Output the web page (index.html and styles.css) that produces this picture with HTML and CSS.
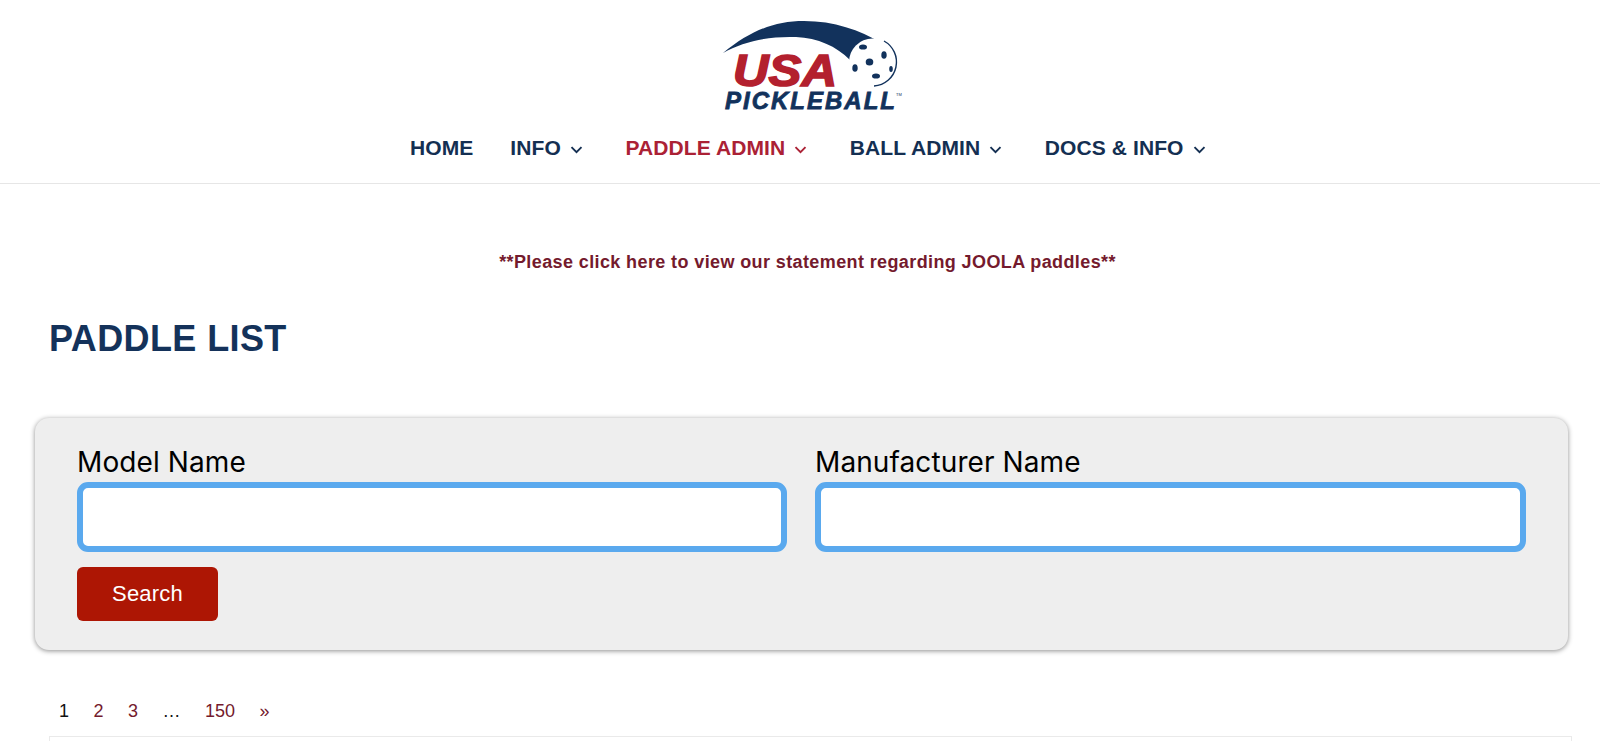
FILE: index.html
```html
<!DOCTYPE html>
<html lang="en">
<head>
<meta charset="utf-8">
<title>Paddle List</title>
<link rel="stylesheet" href="styles.css">
</head>
<body>
<header class="site-header">
  <svg class="logo" viewBox="0 0 220 125" width="220" height="125" aria-label="USA Pickleball">
    <path class="navy" d="M23 53C50 31 74 21 104 21C134 21 160 30 181 43L150 60C136 46 118 38 96 37C70 36 44 41 23 53Z"/>
    <circle class="ball" cx="172.5" cy="62" r="23.5"/>
    <path class="ball-edge" d="M184 41A24 24 0 0 1 174 86"/>
    <ellipse class="navy" cx="163" cy="47" rx="4" ry="2.6"/>
    <ellipse class="navy" cx="184" cy="55" rx="2.7" ry="3.8"/>
    <ellipse class="navy" cx="169.500" cy="62" rx="3.8" ry="3.6"/>
    <ellipse class="navy" cx="155" cy="68" rx="2.7" ry="3.8"/>
    <ellipse class="navy" cx="176" cy="76" rx="4" ry="2.6"/>
    <ellipse class="navy" cx="191" cy="69" rx="1.8" ry="3"/>
    <text class="logo-usa" x="33" y="86" textLength="104" lengthAdjust="spacingAndGlyphs">USA</text>
    <text class="logo-pb" x="25" y="109" textLength="170" lengthAdjust="spacing">PICKLEBALL</text>
    <text class="logo-tm" x="196" y="96">TM</text>
  </svg>
  <nav class="main-nav">
    <a class="nav-item">HOME</a>
    <a class="nav-item">INFO <svg class="chev" viewBox="0 0 15 8"><path d="M2.500 1.200 7.500 6.200 12.500 1.200"/></svg></a>
    <a class="nav-item active">PADDLE ADMIN <svg class="chev" viewBox="0 0 15 8"><path d="M2.500 1.200 7.500 6.200 12.500 1.200"/></svg></a>
    <a class="nav-item">BALL ADMIN <svg class="chev" viewBox="0 0 15 8"><path d="M2.500 1.200 7.500 6.200 12.500 1.200"/></svg></a>
    <a class="nav-item">DOCS &amp; INFO <svg class="chev" viewBox="0 0 15 8"><path d="M2.500 1.200 7.500 6.200 12.500 1.200"/></svg></a>
  </nav>
</header>
<main class="content">
  <p class="notice">**Please click here to view our statement regarding JOOLA paddles**</p>
  <h1 class="title">PADDLE LIST</h1>
  <form class="search-panel">
    <div class="fields">
      <label class="field"><span class="field-label">Model Name</span><input class="field-input" type="text"></label>
      <label class="field"><span class="field-label">Manufacturer Name</span><input class="field-input" type="text"></label>
    </div>
    <button class="search-btn" type="button">Search</button>
  </form>
  <div class="pager">
    <span class="page current">1</span>
    <a class="page">2</a>
    <a class="page">3</a>
    <span class="page dots">…</span>
    <a class="page">150</a>
    <a class="page">»</a>
  </div>
  <div class="table-top"></div>
</main>
</body>
</html>
```
FILE: styles.css
```css
* { box-sizing: border-box; }
html, body { margin: 0; height: 741px; overflow: hidden; background: #fff; }
body { font-family: "Liberation Sans", Arial, sans-serif; color: #000; }

.site-header {
  height: 184px;
  border-bottom: 1px solid #e6e6e6;
  display: flex;
  flex-direction: column;
  align-items: center;
}
.logo { display: block; flex: none; margin-left: 20px; }
.navy { fill: #12325c; }
.ball { fill: #fff; }
.ball-edge { fill: none; stroke: #12325c; stroke-width: 1.4; }
.logo-usa { font: italic bold 45px "Liberation Sans", sans-serif; fill: #b3202e; stroke: #b3202e; stroke-width: 1.6px; }
.logo-pb { font: italic bold 24px "Liberation Sans", sans-serif; fill: #12325c; stroke: #12325c; stroke-width: 0.8px; }
.logo-tm { font: 4px "Liberation Sans", sans-serif; fill: #12325c; }

.main-nav {
  display: flex;
  gap: 37px;
  margin: 10px 0 0 21px;
  font-size: 21px;
  font-weight: 700;
  line-height: 26px;
  letter-spacing: 0.1px;
  color: #142f52;
}
.nav-item { display: flex; align-items: center; gap: 8px; white-space: nowrap; }
.nav-item.active { color: #ab2135; }
.chev { width: 15px; height: 8px; margin-top: 3px; margin-right: 4.5px; }
.chev path { fill: none; stroke: currentColor; stroke-width: 1.9; }

.content { padding: 0 28px 0 49px; }
.notice {
  margin: 67px 0 0;
  text-align: center;
  font-size: 18px;
  line-height: 22px;
  font-weight: 700;
  color: #741a2d;
  letter-spacing: 0.39px;
  padding-right: 6px;
}
.title {
  margin: 44px 0 0;
  font-size: 36px;
  line-height: 44px;
  font-weight: 700;
  color: #14325a;
  letter-spacing: 0.4px;
}
.search-panel {
  margin: 57px 0 0 -14px;
  height: 232px;
  width: 1533px;
  padding: 27px 42px 0;
  background: #eee;
  border-radius: 14px;
  box-shadow: 0 1px 5px rgba(0, 0, 0, 0.45);
}
.fields { display: grid; grid-template-columns: 710px 711px; gap: 28px; }
.field { display: block; }
.field-label {
  display: block;
  margin-bottom: 3px;
  font-family: Inter, "Liberation Sans", sans-serif;
  font-size: 28px;
  line-height: 34px;
  letter-spacing: 0.1px;
  color: #000;
}
.field-input {
  display: block;
  width: 100%;
  height: 70px;
  border: 6.5px solid #5aa9ee;
  border-radius: 11px;
  background: #fff;
  outline: 0;
}
.search-btn {
  display: block;
  margin-top: 15px;
  width: 141px;
  height: 54px;
  border: 0;
  border-radius: 6px;
  background: #ad1604;
  color: #fff;
  font: 22px "Liberation Sans", sans-serif;
  letter-spacing: 0.2px;
}
.pager {
  display: flex;
  align-items: center;
  margin-top: 48px;
  height: 26px;
  padding-left: 10px;
  gap: 24.5px;
  font-size: 18px;
  color: #741a2d;
}
.page.current, .page.dots { color: #111; }
.table-top {
  margin: 12px 0 0;
  height: 40px;
  width: 1523px;
  border: 1px solid #eaeaea;
}
```
